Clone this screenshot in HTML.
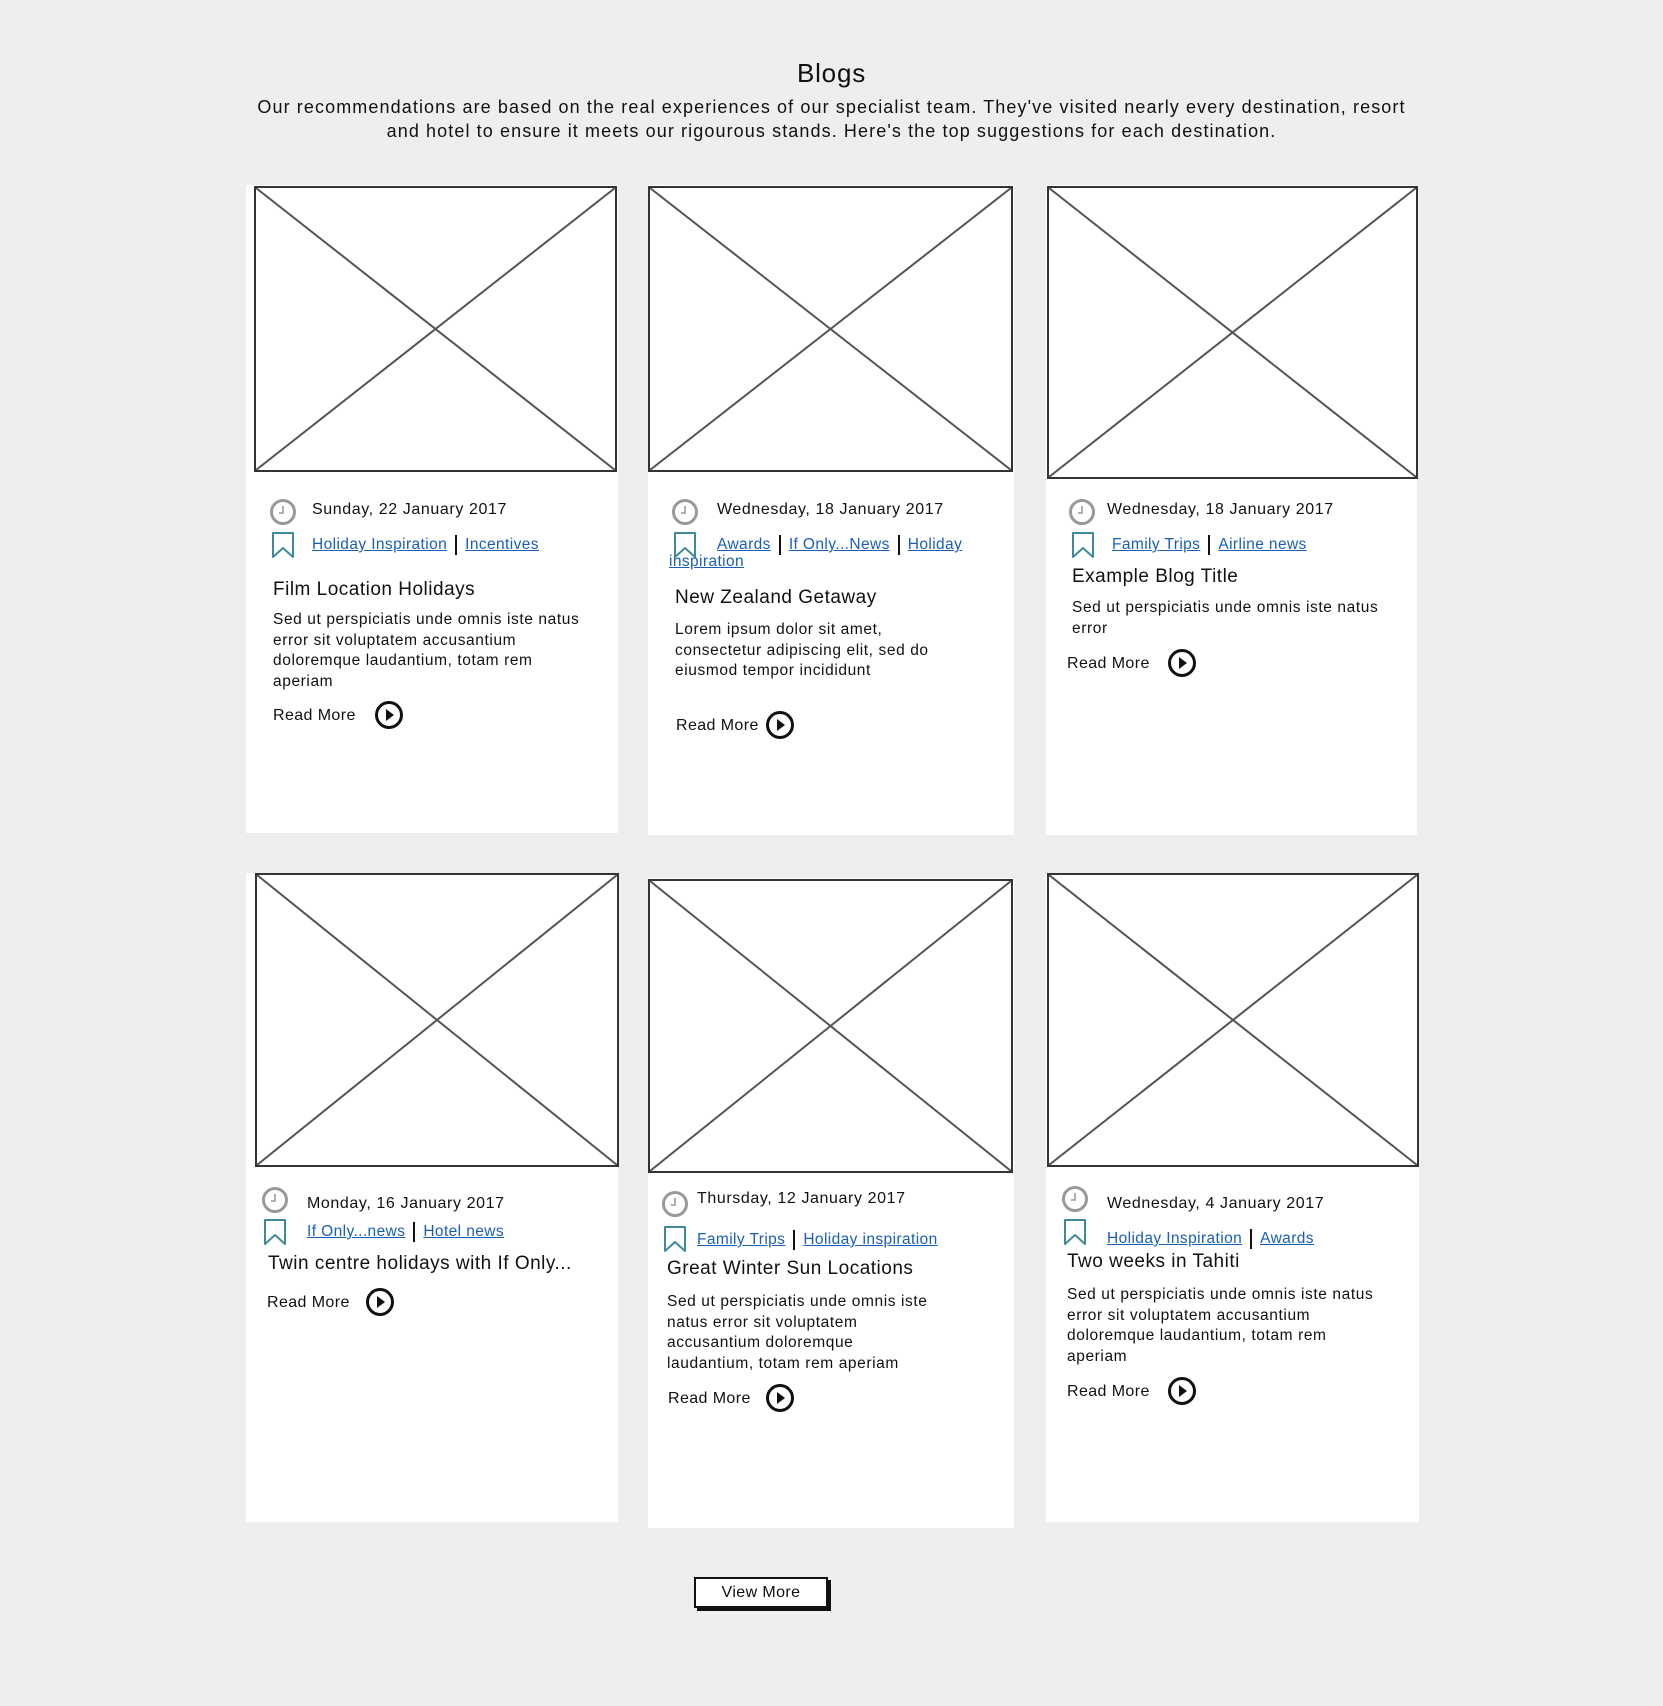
<!DOCTYPE html>
<html><head><meta charset="utf-8">
<style>
*{margin:0;padding:0;box-sizing:border-box}
body{width:1663px;height:1706px;background:#eeeeee;position:relative;overflow:hidden;font-family:"Liberation Sans",sans-serif;color:#111}
.a{position:absolute;white-space:nowrap}
.card{position:absolute;background:#fff}
.img{position:absolute;border:2px solid #333;background:#fff}
.img svg{width:100%;height:100%;display:block}
.t{font-size:16px;line-height:20px;letter-spacing:0.6px}
.ti{font-size:19px;line-height:22px;letter-spacing:0.5px}
.tags{font-size:15.5px;line-height:20px;letter-spacing:0.4px}
.tags a{color:#1a5fb4;text-decoration:underline}
.sep{display:inline-block;width:2px;height:20px;background:#111;vertical-align:middle;margin:0 8px}
.body{font-size:15.5px;line-height:20.5px;letter-spacing:0.6px}
.rm{font-size:16px;line-height:20px;letter-spacing:0.4px}
</style></head><body>

<div class="a" style="left:0;width:1663px;text-align:center;top:57px;font-size:26px;line-height:32px;letter-spacing:0.8px">Blogs</div>
<div class="a" style="left:0;width:1663px;text-align:center;top:95px;font-size:18px;line-height:24px;letter-spacing:1.1px">Our recommendations are based on the real experiences of our specialist team. They've visited nearly every destination, resort<br>and hotel to ensure it meets our rigourous stands. Here's the top suggestions for each destination.</div>

<div class="card" style="left:246px;top:185px;width:372px;height:648px"></div>
<div class="card" style="left:648px;top:185px;width:366px;height:650px"></div>
<div class="card" style="left:1046px;top:185px;width:371px;height:650px"></div>
<div class="card" style="left:246px;top:873px;width:372px;height:649px"></div>
<div class="card" style="left:648px;top:878px;width:366px;height:650px"></div>
<div class="card" style="left:1046px;top:873px;width:373px;height:649px"></div>

<div class="img" style="left:254px;top:186px;width:363px;height:286px"><svg viewBox="0 0 100 100" preserveAspectRatio="none"><path d="M0 0L100 100M100 0L0 100" stroke="#555" stroke-width="2" vector-effect="non-scaling-stroke"/></svg></div>
<div class="img" style="left:648px;top:186px;width:365px;height:286px"><svg viewBox="0 0 100 100" preserveAspectRatio="none"><path d="M0 0L100 100M100 0L0 100" stroke="#555" stroke-width="2" vector-effect="non-scaling-stroke"/></svg></div>
<div class="img" style="left:1047px;top:186px;width:371px;height:293px"><svg viewBox="0 0 100 100" preserveAspectRatio="none"><path d="M0 0L100 100M100 0L0 100" stroke="#555" stroke-width="2" vector-effect="non-scaling-stroke"/></svg></div>
<div class="img" style="left:255px;top:873px;width:364px;height:294px"><svg viewBox="0 0 100 100" preserveAspectRatio="none"><path d="M0 0L100 100M100 0L0 100" stroke="#555" stroke-width="2" vector-effect="non-scaling-stroke"/></svg></div>
<div class="img" style="left:648px;top:879px;width:365px;height:294px"><svg viewBox="0 0 100 100" preserveAspectRatio="none"><path d="M0 0L100 100M100 0L0 100" stroke="#555" stroke-width="2" vector-effect="non-scaling-stroke"/></svg></div>
<div class="img" style="left:1047px;top:873px;width:372px;height:294px"><svg viewBox="0 0 100 100" preserveAspectRatio="none"><path d="M0 0L100 100M100 0L0 100" stroke="#555" stroke-width="2" vector-effect="non-scaling-stroke"/></svg></div>

<svg width="0" height="0" style="position:absolute">
<defs>
<symbol id="clk" viewBox="0 0 28 28"><circle cx="14" cy="14" r="11.5" fill="#fff" stroke="#999" stroke-width="3"/><path d="M14 8V15H10" fill="none" stroke="#999" stroke-width="1.6"/></symbol>
<symbol id="bm" viewBox="0 0 24 28"><path d="M2 2H22V26L12 17L2 26Z" fill="none" stroke="#3f8a9a" stroke-width="2" stroke-linejoin="round"/></symbol>
<symbol id="pl" viewBox="0 0 30 30"><circle cx="15" cy="15" r="12.5" fill="#fff" stroke="#111" stroke-width="3"/><path d="M12 9L20 15L12 21Z" fill="#111"/></symbol>
</defs></svg>

<!-- Card 1 -->
<svg class="a" style="left:269px;top:498px" width="28" height="28"><use href="#clk"/></svg>
<div class="a t" style="left:312px;top:500px">Sunday, 22 January 2017</div>
<svg class="a" style="left:271px;top:531px" width="24" height="28"><use href="#bm"/></svg>
<div class="a tags" style="left:312px;top:535px"><a>Holiday Inspiration</a><span class="sep"></span><a>Incentives</a></div>
<div class="a ti" style="left:273px;top:579px">Film Location Holidays</div>
<div class="a body" style="left:273px;top:610px">Sed ut perspiciatis unde omnis iste natus<br>error sit voluptatem accusantium<br>doloremque laudantium, totam rem<br>aperiam</div>
<div class="a rm" style="left:273px;top:706px">Read More</div>
<svg class="a" style="left:374px;top:700px" width="30" height="30"><use href="#pl"/></svg>

<!-- Card 2 -->
<svg class="a" style="left:671px;top:498px" width="28" height="28"><use href="#clk"/></svg>
<div class="a t" style="left:717px;top:500px">Wednesday, 18 January 2017</div>
<svg class="a" style="left:673px;top:531px" width="24" height="28"><use href="#bm"/></svg>
<div class="a tags" style="left:717px;top:535px"><a>Awards</a><span class="sep"></span><a>If Only...News</a><span class="sep"></span><a>Holiday</a></div>
<div class="a tags" style="left:669px;top:552px"><a>inspiration</a></div>
<div class="a ti" style="left:675px;top:587px">New Zealand Getaway</div>
<div class="a body" style="left:675px;top:620px">Lorem ipsum dolor sit amet,<br>consectetur adipiscing elit, sed do<br>eiusmod tempor incididunt</div>
<div class="a rm" style="left:676px;top:716px">Read More</div>
<svg class="a" style="left:765px;top:710px" width="30" height="30"><use href="#pl"/></svg>

<!-- Card 3 -->
<svg class="a" style="left:1068px;top:498px" width="28" height="28"><use href="#clk"/></svg>
<div class="a t" style="left:1107px;top:500px">Wednesday, 18 January 2017</div>
<svg class="a" style="left:1071px;top:531px" width="24" height="28"><use href="#bm"/></svg>
<div class="a tags" style="left:1112px;top:535px"><a>Family Trips</a><span class="sep"></span><a>Airline news</a></div>
<div class="a ti" style="left:1072px;top:566px">Example Blog Title</div>
<div class="a body" style="left:1072px;top:598px">Sed ut perspiciatis unde omnis iste natus<br>error</div>
<div class="a rm" style="left:1067px;top:654px">Read More</div>
<svg class="a" style="left:1167px;top:648px" width="30" height="30"><use href="#pl"/></svg>

<!-- Card 4 -->
<svg class="a" style="left:261px;top:1186px" width="28" height="28"><use href="#clk"/></svg>
<div class="a t" style="left:307px;top:1194px">Monday, 16 January 2017</div>
<svg class="a" style="left:263px;top:1218px" width="24" height="28"><use href="#bm"/></svg>
<div class="a tags" style="left:307px;top:1222px"><a>If Only...news</a><span class="sep"></span><a>Hotel news</a></div>
<div class="a ti" style="left:268px;top:1253px">Twin centre holidays with If Only...</div>
<div class="a rm" style="left:267px;top:1293px">Read More</div>
<svg class="a" style="left:365px;top:1287px" width="30" height="30"><use href="#pl"/></svg>

<!-- Card 5 -->
<svg class="a" style="left:661px;top:1190px" width="28" height="28"><use href="#clk"/></svg>
<div class="a t" style="left:697px;top:1189px">Thursday, 12 January 2017</div>
<svg class="a" style="left:663px;top:1225px" width="24" height="28"><use href="#bm"/></svg>
<div class="a tags" style="left:697px;top:1230px"><a>Family Trips</a><span class="sep"></span><a>Holiday inspiration</a></div>
<div class="a ti" style="left:667px;top:1258px">Great Winter Sun Locations</div>
<div class="a body" style="left:667px;top:1292px">Sed ut perspiciatis unde omnis iste<br>natus error sit voluptatem<br>accusantium doloremque<br>laudantium, totam rem aperiam</div>
<div class="a rm" style="left:668px;top:1389px">Read More</div>
<svg class="a" style="left:765px;top:1383px" width="30" height="30"><use href="#pl"/></svg>

<!-- Card 6 -->
<svg class="a" style="left:1061px;top:1185px" width="28" height="28"><use href="#clk"/></svg>
<div class="a t" style="left:1107px;top:1194px">Wednesday, 4 January 2017</div>
<svg class="a" style="left:1063px;top:1218px" width="24" height="28"><use href="#bm"/></svg>
<div class="a tags" style="left:1107px;top:1229px"><a>Holiday Inspiration</a><span class="sep"></span><a>Awards</a></div>
<div class="a ti" style="left:1067px;top:1251px">Two weeks in Tahiti</div>
<div class="a body" style="left:1067px;top:1285px">Sed ut perspiciatis unde omnis iste natus<br>error sit voluptatem accusantium<br>doloremque laudantium, totam rem<br>aperiam</div>
<div class="a rm" style="left:1067px;top:1382px">Read More</div>
<svg class="a" style="left:1167px;top:1376px" width="30" height="30"><use href="#pl"/></svg>

<div class="a" style="left:694px;top:1577px;width:134px;height:31px;background:#fff;border:2px solid #111;box-shadow:3px 3px 0 #111;text-align:center;font-size:16px;line-height:27px;letter-spacing:0.4px">View More</div>

</body></html>
